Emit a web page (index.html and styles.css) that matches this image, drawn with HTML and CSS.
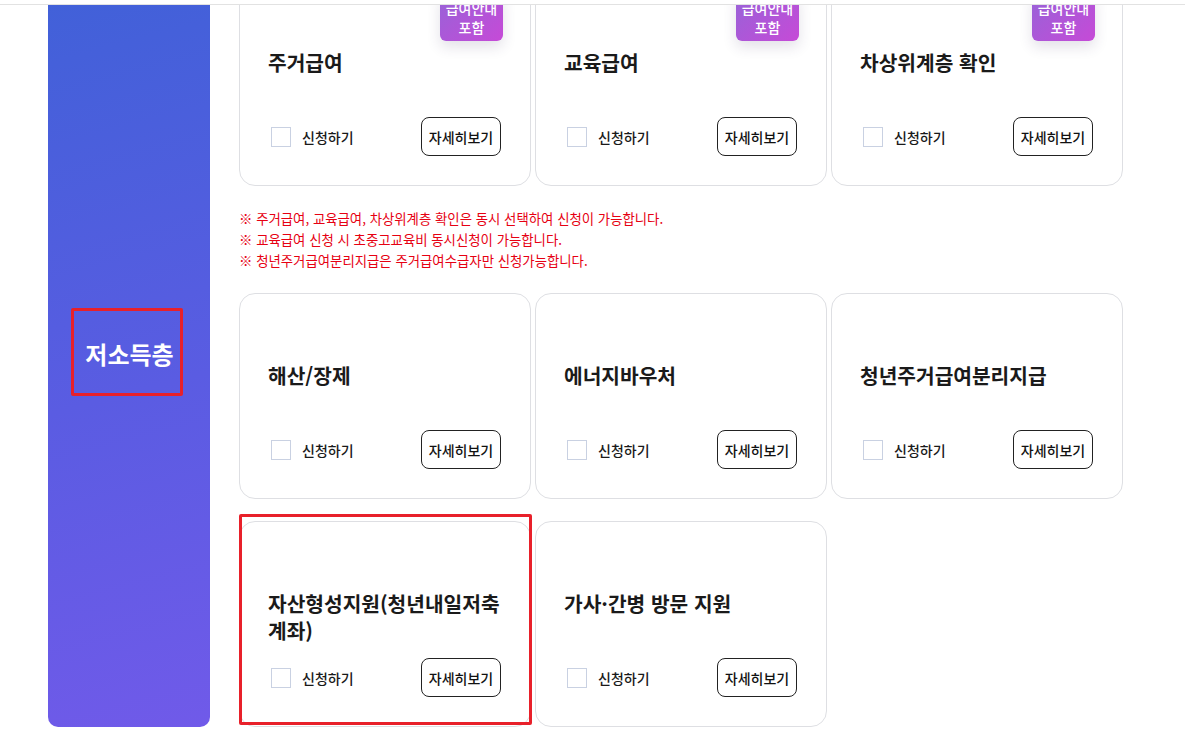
FILE: index.html
```html
<!DOCTYPE html>
<html lang="ko">

<head>
    <meta charset="UTF-8">
    <meta name="viewport" content="width=device-width, initial-scale=1.0">
    <title>급여 신청</title>
    <link rel="stylesheet" href="styles.css">
</head>

<body>
    <div class="topbar"></div>

    <div class="section">
        <div class="side">
            <span class="side-title">저소득층</span>
        </div>

        <div class="content">
            <ul class="cards">
                <li class="card">
                    <span class="badge">급여안내<br>포함</span>
                    <h3 class="card-title">주거급여</h3>
                    <div class="card-foot">
                        <label class="check"><span class="box"></span>신청하기</label>
                        <button class="more">자세히보기</button>
                    </div>
                </li>
                <li class="card">
                    <span class="badge">급여안내<br>포함</span>
                    <h3 class="card-title">교육급여</h3>
                    <div class="card-foot">
                        <label class="check"><span class="box"></span>신청하기</label>
                        <button class="more">자세히보기</button>
                    </div>
                </li>
                <li class="card">
                    <span class="badge">급여안내<br>포함</span>
                    <h3 class="card-title">차상위계층 확인</h3>
                    <div class="card-foot">
                        <label class="check"><span class="box"></span>신청하기</label>
                        <button class="more">자세히보기</button>
                    </div>
                </li>
            </ul>

            <div class="notes">
                <p>※ 주거급여, 교육급여, 차상위계층 확인은 동시 선택하여 신청이 가능합니다.</p>
                <p>※ 교육급여 신청 시 초중고교육비 동시신청이 가능합니다.</p>
                <p>※ 청년주거급여분리지급은 주거급여수급자만 신청가능합니다.</p>
            </div>

            <ul class="cards">
                <li class="card">
                    <h3 class="card-title">해산/장제</h3>
                    <div class="card-foot">
                        <label class="check"><span class="box"></span>신청하기</label>
                        <button class="more">자세히보기</button>
                    </div>
                </li>
                <li class="card">
                    <h3 class="card-title">에너지바우처</h3>
                    <div class="card-foot">
                        <label class="check"><span class="box"></span>신청하기</label>
                        <button class="more">자세히보기</button>
                    </div>
                </li>
                <li class="card">
                    <h3 class="card-title">청년주거급여분리지급</h3>
                    <div class="card-foot">
                        <label class="check"><span class="box"></span>신청하기</label>
                        <button class="more">자세히보기</button>
                    </div>
                </li>
                <li class="card">
                    <span class="mark"></span>
                    <h3 class="card-title">자산형성지원(청년내일저축계좌)</h3>
                    <div class="card-foot">
                        <label class="check"><span class="box"></span>신청하기</label>
                        <button class="more">자세히보기</button>
                    </div>
                </li>
                <li class="card">
                    <h3 class="card-title">가사·간병 방문 지원</h3>
                    <div class="card-foot">
                        <label class="check"><span class="box"></span>신청하기</label>
                        <button class="more">자세히보기</button>
                    </div>
                </li>
            </ul>
        </div>
    </div>
</body>

</html>
```

FILE: styles.css
```css
* {
    box-sizing: border-box;
}

html,
body {
    margin: 0;
    padding: 0;
    background: #fff;
    overflow: hidden;
    font-family: "Noto Sans CJK KR", "Noto Sans", sans-serif;
    color: #1a1a1a;
}

/* 상단 고정 헤더 하단선 */
.topbar {
    position: fixed;
    top: 0;
    left: 0;
    right: 0;
    height: 5px;
    background: #fff;
    border-bottom: 1px solid #e2e2e2;
    z-index: 10;
}

.section {
    display: flex;
    gap: 29px;
    padding-left: 48px;
    margin-top: -20px;
}

/* 왼쪽 분류 영역 */
.side {
    width: 162px;
    flex-shrink: 0;
    display: flex;
    align-items: center;
    justify-content: center;
    border-radius: 0 0 10px 10px;
    background: linear-gradient(165deg, #4061d8 0%, #5a5ce2 55%, #705ae9 100%);
}

.side-title {
    display: block;
    margin: -4px 0 0 -4px;
    padding: 24px 6px 20px 11px;
    border: 3px solid #e8202a;
    border-radius: 2px;
    font-size: 24px;
    line-height: 38px;
    font-weight: 700;
    color: #fff;
}

.content {
    width: 884px;
}

.cards {
    list-style: none;
    margin: 0;
    padding: 0;
    display: grid;
    grid-template-columns: repeat(3, 292px);
    column-gap: 4px;
    row-gap: 22px;
}

.card {
    position: relative;
    height: 206px;
    padding: 68px 29px 29px 28px;
    display: flex;
    flex-direction: column;
    border: 1px solid #dedfe3;
    border-radius: 16px;
    background: #fff;
}

.card-title {
    flex: 1;
    margin: 0;
    font-size: 20.3px;
    line-height: 27px;
    font-weight: 700;
    color: #1a1a1a;
}

.card-foot {
    display: flex;
    align-items: center;
    justify-content: space-between;
}

.check {
    display: flex;
    align-items: center;
    gap: 11px;
    font-size: 14px;
    font-weight: 500;
    color: #1a1a1a;
    cursor: pointer;
}

.box {
    width: 20px;
    height: 20px;
    margin-left: 3px;
    border: 1px solid #c9d1e2;
    background: #fff;
}

.more {
    width: 80px;
    height: 39px;
    padding: 0;
    border: 1px solid #222;
    border-radius: 8px;
    background: #fff;
    font-family: inherit;
    font-size: 14px;
    font-weight: 500;
    color: #111;
    cursor: pointer;
}

/* 급여안내 배지 */
.badge {
    position: absolute;
    top: 11px;
    right: 27px;
    width: 63px;
    padding: 7px 0 4px;
    border-radius: 6px;
    background: linear-gradient(135deg, #9763d8 0%, #c64ad7 100%);
    box-shadow: 0 6px 14px rgba(60, 40, 90, 0.14);
    text-align: center;
    font-size: 14px;
    line-height: 19px;
    font-weight: 500;
    color: #fff;
}

/* 선택 표시 */
.mark {
    position: absolute;
    top: -8px;
    left: -1px;
    width: 293px;
    height: 211px;
    border: 3px solid #e8202a;
    border-radius: 2px;
    pointer-events: none;
}

.notes {
    padding: 22px 0;
}

.notes p {
    margin: 0;
    font-size: 13.4px;
    line-height: 21px;
    color: #e60012;
}
```
